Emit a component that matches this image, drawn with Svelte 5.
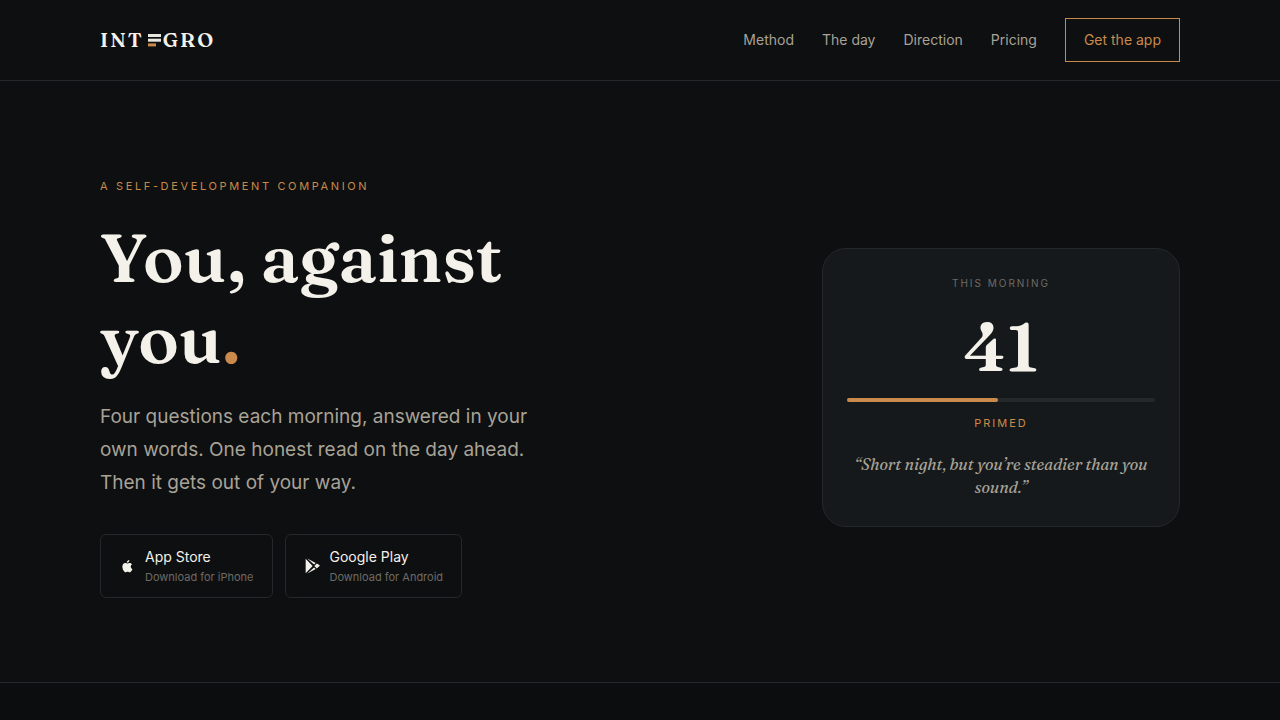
<script>
  const links = ['Method', 'The day', 'Direction', 'Pricing'];
  const reading = { score: 41, state: 'Primed', fill: 49 };
</script>

<header class="site-header">
  <div class="wrap bar">
    <a class="logo" href="#top" aria-label="Integro">
      <span>INT</span>
      <svg width="13" height="13" viewBox="0 0 13 13" aria-hidden="true">
        <rect width="13" height="3" y="0" fill="#e9e5df" />
        <rect width="13" height="3" y="4.700" fill="#e9e5df" />
        <rect width="8" height="3" y="9.400" fill="#c98a4b" />
      </svg>
      <span>GRO</span>
    </a>
    <nav aria-label="Main">
      {#each links as link}
        <a href="#{link.toLowerCase().replace(' ', '-')}">{link}</a>
      {/each}
      <a class="cta" href="#get">Get the app</a>
    </nav>
  </div>
</header>

<main id="top">
  <section class="hero">
    <div class="wrap columns">
      <div class="intro">
        <p class="eyebrow">A self-development companion</p>
        <h1>You, against you<span class="dot">.</span></h1>
        <p class="lead">
          Four questions each morning, answered in your own words. One honest read on the day ahead. Then
          it gets out of your way.
        </p>
        <div class="stores" id="get">
          <a class="store" href="#ios">
            <svg width="16" height="16" viewBox="0 0 24 24" fill="currentColor" aria-hidden="true">
              <path d="M17.600 13c0-2.400 2-3.500 2-3.600-1.100-1.600-2.800-1.800-3.400-1.900-1.500-.1-2.800.9-3.500.9-.8 0-1.900-.9-3-.8-1.600 0-3 .9-3.900 2.200-1.600 2.900-.4 7.100 1.200 9.400.8 1.100 1.700 2.400 2.900 2.300 1.200 0 1.600-.7 3-.7s1.800.7 3.100.7c1.300 0 2.100-1.100 2.900-2.300.9-1.300 1.200-2.600 1.300-2.700-.1 0-2.600-1-2.600-3.500zM14.500 6c.7-.8 1.100-1.900 1-3-1 0-2.100.6-2.800 1.400-.6.7-1.100 1.800-1 2.900 1.100.1 2.200-.5 2.800-1.300z" />
            </svg>
            <span class="store-text"><strong>App Store</strong><small>Download for iPhone</small></span>
          </a>
          <a class="store" href="#android">
            <svg width="16" height="16" viewBox="0 0 24 24" fill="currentColor" aria-hidden="true">
              <path d="M2.500 1v22L13 12zM4.900.8l10.200 8.900 2.500-2.200zM4.900 23.200l10.200-8.900 2.500 2.200zM19.300 8.300L15.500 12l3.800 3.700 4.700-4.500z" />
            </svg>
            <span class="store-text"><strong>Google Play</strong><small>Download for Android</small></span>
          </a>
        </div>
      </div>

      <article class="card">
        <p class="card-label">This morning</p>
        <p class="score">{reading.score}</p>
        <div class="track"><div class="fill" style="width: {reading.fill}%"></div></div>
        <p class="state">{reading.state}</p>
        <blockquote>“Short night, but you’re steadier than you sound.”</blockquote>
      </article>
    </div>
  </section>
</main>

<style>
  :global(body) {
    background: #0b0d0e;
    color: #f4f1ea;
    font-family: Inter, 'Liberation Sans', sans-serif;
  }

  p,
  h1,
  blockquote {
    margin: 0;
  }

  a {
    color: inherit;
    text-decoration: none;
  }

  .wrap {
    max-width: 1080px;
    margin: 0 auto;
    padding: 0 24px;
  }

  .site-header,
  .hero {
    border-bottom: 1px solid #25282a;
    background: #0d0f10;
  }

  .bar {
    display: flex;
    align-items: center;
    justify-content: space-between;
    padding-top: 18px;
    padding-bottom: 18px;
  }

  .logo {
    display: flex;
    align-items: center;
    font: 600 20px/24px Fraunces, 'Liberation Serif', serif;
    letter-spacing: 2px;
  }

  .logo svg {
    margin: 0 2px 0 4px;
  }

  nav {
    display: flex;
    align-items: center;
    gap: 28px;
    font-size: 14px;
    line-height: 20px;
    color: #a8a297;
  }

  .cta {
    padding: 11px 18px;
    border: 1px solid #c98a4b;
    color: #c98a4b;
  }

  .hero {
    padding: 96px 0 84px;
  }

  .columns {
    display: flex;
    flex-wrap: wrap;
    align-items: center;
    justify-content: space-between;
    gap: 48px;
  }

  .intro {
    flex: 0 1 440px;
  }

  .eyebrow,
  .card-label,
  .state {
    font-size: 11px;
    line-height: 18px;
    letter-spacing: 2px;
    text-transform: uppercase;
    color: #c98a4b;
  }

  .eyebrow {
    letter-spacing: 0.24em;
  }

  h1 {
    margin-top: 22px;
    font: 600 68px/81px 'Fraunces 144pt', 'Fraunces 72pt', Fraunces, 'Liberation Serif', serif;
  }

  .dot {
    color: #c98a4b;
  }

  .lead {
    margin-top: 21px;
    font-size: 19px;
    line-height: 33px;
    color: #a8a297;
  }

  .stores {
    display: flex;
    flex-wrap: wrap;
    gap: 12px;
    margin-top: 35px;
  }

  .store {
    display: flex;
    align-items: center;
    gap: 10px;
    padding: 11px 18px;
    border: 1px solid #25282a;
    border-radius: 6px;
  }

  .store-text {
    display: grid;
  }

  .store strong {
    font-size: 14px;
    font-weight: 400;
    line-height: 22px;
  }

  .store small {
    font-size: 11px;
    line-height: 18px;
    color: #6e6b65;
  }

  .card {
    box-sizing: border-box;
    flex: 0 1 358px;
    padding: 24px 24px 27px;
    border: 1px solid #25282a;
    border-radius: 24px;
    background: #15191b;
    text-align: center;
  }

  .card-label {
    font-size: 10px;
    line-height: 20px;
    color: #6e6b65;
  }

  .score {
    margin: 17px 0 16px;
    font: 600 68px/72px 'Fraunces 144pt', 'Fraunces 72pt', Fraunces, 'Liberation Serif', serif;
  }

  .track {
    height: 4px;
    border-radius: 2px;
    background: #25282a;
  }

  .fill {
    height: 100%;
    border-radius: 2px;
    background: #c98a4b;
  }

  .state {
    margin-top: 12px;
  }

  blockquote {
    margin-top: 21px;
    font: italic 400 16px/23px Fraunces, 'Liberation Serif', serif;
    color: #a8a297;
  }
</style>
